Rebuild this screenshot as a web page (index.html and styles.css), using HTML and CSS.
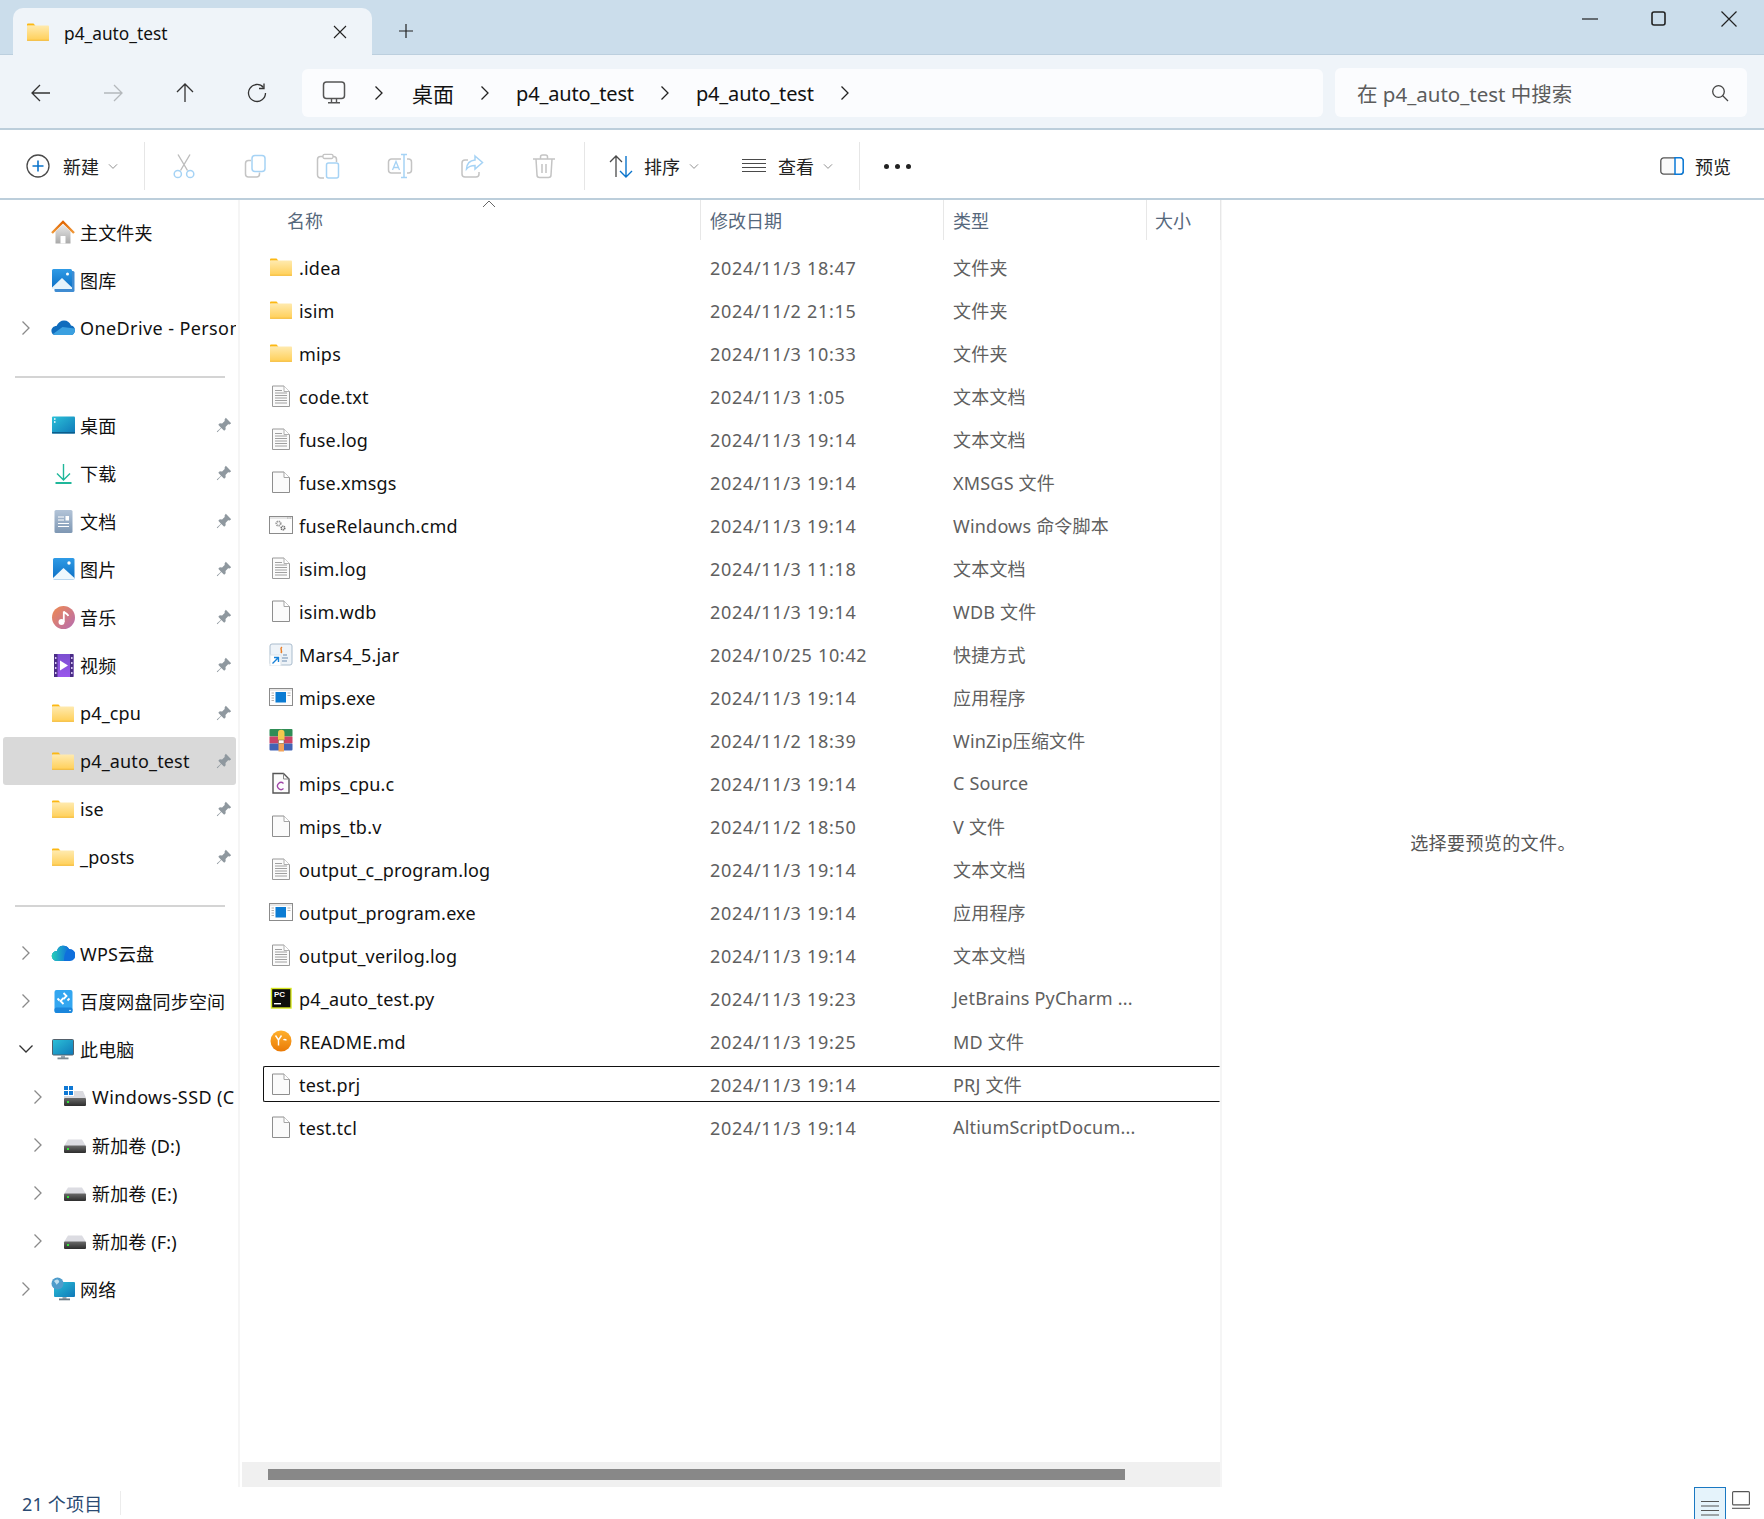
FILE: index.html
```html
<!DOCTYPE html>
<html lang="zh-CN">
<head>
<meta charset="utf-8">
<title>p4_auto_test</title>
<link rel="stylesheet" href="styles.css">
</head>
<body>
<svg class="defs" xmlns="http://www.w3.org/2000/svg">
  <defs>
    <linearGradient id="gFolder" x1="0" y1="0" x2="0" y2="1"><stop offset="0" stop-color="#ffeaae"/><stop offset="1" stop-color="#ffcf57"/></linearGradient>
    <linearGradient id="gBlue" x1="0" y1="0" x2="0" y2="1"><stop offset="0" stop-color="#2f9be6"/><stop offset="1" stop-color="#0c6fc4"/></linearGradient>
    <linearGradient id="gTeal" x1="0" y1="0" x2="1" y2="1"><stop offset="0" stop-color="#2cc1d8"/><stop offset="1" stop-color="#0f78b8"/></linearGradient>
    <linearGradient id="gDoc" x1="0" y1="0" x2="0" y2="1"><stop offset="0" stop-color="#b3c4d8"/><stop offset="1" stop-color="#7e97b3"/></linearGradient>
    <linearGradient id="gMusic" x1="0" y1="0" x2="1" y2="1"><stop offset="0" stop-color="#f08a4e"/><stop offset="1" stop-color="#b56cb4"/></linearGradient>
    <linearGradient id="gVideo" x1="0" y1="0" x2="0" y2="1"><stop offset="0" stop-color="#7b4fd0"/><stop offset="1" stop-color="#9a56ec"/></linearGradient>
    <linearGradient id="gHome" x1="0" y1="0" x2="0" y2="1"><stop offset="0" stop-color="#e9e9e9"/><stop offset="1" stop-color="#a9a9a9"/></linearGradient>
    <linearGradient id="gRoof" x1="0" y1="0" x2="0" y2="1"><stop offset="0" stop-color="#e06400"/><stop offset="1" stop-color="#f09a3a"/></linearGradient>
    <linearGradient id="gWps" x1="0" y1="0" x2="1" y2="0"><stop offset="0" stop-color="#27cfb7"/><stop offset="1" stop-color="#0f6fdc"/></linearGradient>
    <linearGradient id="gDrive" x1="0" y1="0" x2="0" y2="1"><stop offset="0" stop-color="#6b6b6b"/><stop offset="1" stop-color="#2c2c2c"/></linearGradient>
    <linearGradient id="gOrange" x1="0" y1="0" x2="0" y2="1"><stop offset="0" stop-color="#ffb12e"/><stop offset="1" stop-color="#ea7a06"/></linearGradient>

    <symbol id="i-folder" viewBox="0 0 24 24"><path d="M1 4.500a1 1 0 0 1 1-1h5.500l2 2.200H1z" fill="#fcb813"/><rect x="1" y="5.600" width="22" height="15" rx=".8" fill="url(#gFolder)"/><rect x="1" y="19.800" width="22" height=".9" fill="#f2b52a"/></symbol>
    <symbol id="i-blank" viewBox="0 0 24 24"><path d="M3.500 2h11.500l5.500 5.500V22.500h-17z" fill="#fbfbfb" stroke="#8e8e8e"/><path d="M15 2v5.500h5.500" fill="#fff" stroke="#a5a5a5"/></symbol>
    <symbol id="i-text" viewBox="0 0 24 24"><path d="M3.500 2h11.500l5.500 5.500V22.500h-17z" fill="#fbfbfb" stroke="#9a9a9a"/><path d="M15 2v5.500h5.500" fill="#fff" stroke="#b0b0b0"/><path d="M6 6.500h7M6 9h12M6 11.500h12M6 14h12M6 16.500h12M6 19h12" stroke="#a0a0a0" stroke-width="1" fill="none"/></symbol>
    <symbol id="i-cmd" viewBox="0 0 24 24"><rect x=".5" y="3.500" width="23" height="17" fill="#fdfdfd" stroke="#8b8b8b"/><rect x="1" y="4" width="22" height="2" fill="#e6e6e6"/><path d="M18 5h1.500M20.500 5H22" stroke="#aaa"/><circle cx="9.500" cy="10.500" r="2.200" fill="none" stroke="#9a9a9a" stroke-width="1.800" stroke-dasharray="1.300 .6"/><circle cx="14" cy="15" r="1.800" fill="none" stroke="#6d6d6d" stroke-width="1.600" stroke-dasharray="1.200 .5"/></symbol>
    <symbol id="i-exe" viewBox="0 0 24 24"><rect x=".5" y="3.500" width="23" height="17" fill="#fdfdfd" stroke="#8b8b8b"/><rect x="1" y="4" width="22" height="2" fill="#e8e8e8"/><rect x="6.500" y="7" width="10.500" height="10.500" fill="#0a7bd3"/><path d="M2.500 8h2.500M2.500 10.500h2.500M2.500 13h2.500M2.500 15.500h2.500M18.500 8h3M18.500 10.500h3" stroke="#b0b0b0"/></symbol>
    <symbol id="i-zip" viewBox="0 0 24 24"><rect x=".5" y="1" width="23" height="7.500" rx="1" fill="#2f8d56"/><rect x=".5" y="8.500" width="23" height="7" fill="#c94468"/><rect x=".5" y="15.500" width="23" height="7" rx="1" fill="#4263b5"/><rect x="9.500" y="13" width="5.500" height="10.500" fill="#f2a35a"/><path d="M9 12V5a3.200 3.200 0 0 1 6.500 0v7z" fill="#f4c94e"/><rect x="9.500" y="12" width="5.500" height="3.500" fill="#fff" stroke="#8b6a3e" stroke-width=".6"/></symbol>
    <symbol id="i-c" viewBox="0 0 24 24"><path d="M4 2.500h10.500l5.500 5.500v14H4z" fill="#fcfcfc" stroke="#555" stroke-width="1.400"/><path d="M14.500 2.500V8H20" fill="none" stroke="#888"/><path d="M14.500 12.500a3.500 3.500 0 1 0 0 5" fill="none" stroke="#a046a8" stroke-width="1.300"/></symbol>
    <symbol id="i-jar" viewBox="0 0 24 24"><rect x="1" y="2" width="22" height="21" rx="2" fill="#eef3f8" stroke="#a9bccd"/><path d="M13 5c-3 2 1 3-1 6" fill="none" stroke="#ea7d25" stroke-width="1.500"/><path d="M14 13h4M13 16h6M13 19h5" stroke="#6d8db0" fill="none"/><rect x="1" y="13" width="11" height="11" fill="#fff" stroke="#dde3e8"/><path d="M3.500 21.500l5.500-5.500M5 15.500h4.500V20" fill="none" stroke="#1681d8" stroke-width="1.400"/></symbol>
    <symbol id="i-py" viewBox="0 0 24 24"><rect x="2.500" y="2.500" width="19.500" height="19.500" fill="#0c0c0c" stroke="#d6e61e" stroke-width="1.400"/><text x="5" y="11" class="svg-pc">PC</text><rect x="5" y="17" width="7" height="1.400" fill="#fff"/></symbol>
    <symbol id="i-md" viewBox="0 0 24 24"><circle cx="12" cy="12" r="10.500" fill="url(#gOrange)"/><path d="M6.500 6.500L9.500 11l3-4.500M9.500 11v5.500M14.500 11c1-1 2-.2 3 0" fill="none" stroke="#fff" stroke-width="1.400"/></symbol>

    <symbol id="i-home" viewBox="0 0 24 24"><path d="M4.500 11.500L12 4.500l7.500 7V23.500h-15z" fill="url(#gHome)"/><rect x="9.500" y="16" width="5" height="7.500" rx=".5" fill="#fff"/><path d="M1 13L12 2l11 11" fill="none" stroke="url(#gRoof)" stroke-width="2.400"/></symbol>
    <symbol id="i-gallery" viewBox="0 0 24 24"><rect x="3.500" y="3" width="20" height="21" rx="1.500" fill="#3f8cd2"/><rect x="1" y="1" width="20" height="20" rx="1.500" fill="url(#gBlue)"/><path d="M1 19.500L11 10l10 9.500V21H1z" fill="#e7f4fb"/><circle cx="16.500" cy="6" r="1.500" fill="#fff"/></symbol>
    <symbol id="i-onedrive" viewBox="0 0 24 24"><path d="M.6 16c-.8-3 1.400-6 4.900-6C7 6.500 10 4.500 13 4.500c3.500 0 6 2 7 5 2.500.3 4 2.500 4 4.500 0 3-2 5-4 5H4C2.300 19 1 17.800.6 16z" fill="#0f6cbd"/><path d="M2 18c.6.7 1.300 1 2 1h16c2 0 4-2 4-5 0-.5-.1-1-.3-1.500L11.500 11z" fill="#3ba0e0"/></symbol>
    <symbol id="i-desktop" viewBox="0 0 24 24"><rect x="1" y="3.500" width="23" height="17" rx="1" fill="url(#gTeal)"/><rect x="1" y="19" width="23" height="1.500" fill="#0b5d8c"/><path d="M3 6h1.500M3 9h1.500" stroke="#fff" stroke-width="1.400"/></symbol>
    <symbol id="i-download" viewBox="0 0 24 24"><path d="M12.500 3v15M6 12.500l6.500 6.500 6.500-6.500" fill="none" stroke="#1fb79a" stroke-width="1.400"/><rect x="4.500" y="21" width="16" height="2" fill="#1fb79a"/></symbol>
    <symbol id="i-docs" viewBox="0 0 24 24"><rect x="3.500" y="1" width="18" height="23" rx="1.500" fill="url(#gDoc)"/><path d="M7 8h6M7 11h6M7 14.500h11M7 17.500h11" stroke="#fff" stroke-width="1.200"/><rect x="14.500" y="7" width="3.500" height="4.500" fill="#fff"/></symbol>
    <symbol id="i-pics" viewBox="0 0 24 24"><rect x="2" y="1" width="21.500" height="21.500" rx="1.500" fill="url(#gBlue)"/><path d="M2 21L12.500 11 23.500 21v1.500H2z" fill="#eef8fd"/><circle cx="18" cy="6" r="1.700" fill="#fff"/></symbol>
    <symbol id="i-music" viewBox="0 0 24 24"><circle cx="12.500" cy="12.500" r="11.500" fill="url(#gMusic)"/><circle cx="10.500" cy="17" r="3" fill="#fff"/><path d="M12.800 17V6.500c1 2 4 2 4.500 4.500" fill="none" stroke="#fff" stroke-width="1.800"/></symbol>
    <symbol id="i-video" viewBox="0 0 24 24"><rect x="3" y="1" width="19.500" height="23" rx="1.500" fill="url(#gVideo)"/><rect x="3" y="1" width="3.500" height="23" fill="#4a2c86"/><rect x="19" y="1" width="3.500" height="23" fill="#4a2c86"/><path d="M4.700 4v2M4.700 9v2M4.700 14v2M4.700 19v2M20.800 4v2M20.800 9v2M20.800 14v2M20.800 19v2" stroke="#d9c8f5" stroke-width="1.500"/><path d="M9 7.500l8 5-8 5z" fill="#fff"/></symbol>
    <symbol id="i-wps" viewBox="0 0 24 24"><path d="M6 10a6.500 6.500 0 0 1 12-2 6 6 0 0 1 1 12H5.500a5 5 0 0 1 .5-10z" fill="#0f6fdc"/><path d="M6 10a6.500 6.500 0 0 1 12-2c-3 1-5 5-5 12H5.500a5 5 0 0 1 .5-10z" fill="url(#gWps)"/></symbol>
    <symbol id="i-baidu" viewBox="0 0 24 24"><path d="M3.500 3a2 2 0 0 1 2-2h14a2 2 0 0 1 2 2v19a2 2 0 0 1-2 2h-14a2 2 0 0 1-2-2z" fill="#33a6f0"/><rect x="3.500" y="18.500" width="18" height="5.500" rx="2" fill="#1a86dc"/><path d="M12.500 4l3 3-3 3M12.500 15l-3-3 3-3" fill="none" stroke="#fff" stroke-width="1.800"/><path d="M6.500 9.500l2 2M18.500 9.500l-2 2" stroke="#fff" stroke-width="1.800"/><circle cx="19" cy="21.500" r=".8" fill="#fff"/></symbol>
    <symbol id="i-pc" viewBox="0 0 24 24"><rect x="1.500" y="2.500" width="21" height="15.500" rx="1" fill="url(#gTeal)" stroke="#54606b"/><rect x="10" y="18" width="4" height="3" fill="#9aa7b1"/><rect x="6.500" y="20.500" width="11" height="1.800" fill="#7d8991"/></symbol>
    <symbol id="i-ssd" viewBox="0 0 24 24"><rect x="1" y="1" width="4" height="4" fill="#0f78d4"/><rect x="6" y="1" width="4" height="4" fill="#0f78d4"/><rect x="1" y="6" width="4" height="4" fill="#0f78d4"/><rect x="6" y="6" width="4" height="4" fill="#0f78d4"/><path d="M11 6h9l3 7H1l0-2h10z" fill="#d9d9de"/><rect x="1" y="13" width="22" height="8" rx="1" fill="url(#gDrive)"/><rect x="4" y="16" width="2" height="2" fill="#35e43a"/></symbol>
    <symbol id="i-drive" viewBox="0 0 24 24"><path d="M5 6.500h14l4 6.500H1z" fill="#dcdce2"/><rect x="1" y="12.500" width="22" height="7.500" rx="1" fill="url(#gDrive)"/><rect x="4" y="15" width="2" height="2" fill="#35e43a"/></symbol>
    <symbol id="i-net" viewBox="0 0 24 24"><rect x="3" y="5" width="21" height="15" rx="1" fill="url(#gTeal)"/><rect x="11.500" y="20" width="4" height="2" fill="#9aa7b1"/><rect x="8" y="21.500" width="11" height="1.800" fill="#6b7a85"/><circle cx="6.500" cy="6.500" r="6" fill="#4f9ccb"/><path d="M3 4c2-2 4-2 5 0s-2 2-2 4" fill="#bfdff0"/></symbol>

    <symbol id="i-pin" viewBox="0 0 16 16"><path d="M9.800.8l5.400 5.400-1.600 1.200-1.500-.1-2.600 2.600.2 2.300-1.500 1.500L5.300 11l-3.900 4.200-.6-.6L5 10.700 2.300 7.800l1.500-1.500 2.300.2 2.600-2.600-.1-1.500z" fill="#8f989f"/></symbol>
    <symbol id="i-chev" viewBox="0 0 10 16"><path d="M1.500 1.500L8 8l-6.500 6.500" fill="none" stroke="currentColor" stroke-width="1.300"/></symbol>
    <symbol id="i-chevd" viewBox="0 0 16 10"><path d="M1.500 1.500L8 8l6.500-6.500" fill="none" stroke="currentColor" stroke-width="1.300"/></symbol>

    <symbol id="t-new" viewBox="0 0 24 24"><circle cx="12" cy="12" r="11" fill="#fff" stroke="#4a4a4a" stroke-width="1.300"/><path d="M12 6.500v11M6.500 12h11" stroke="#0a74cc" stroke-width="1.600"/></symbol>
    <symbol id="t-cut" viewBox="0 0 26 26"><path d="M7 1.500l9.500 16M19 1.500l-9.500 16" stroke="#bdbdbd" stroke-width="1.400" fill="none"/><circle cx="6.800" cy="21" r="3.600" fill="none" stroke="#a6d3f5" stroke-width="1.500"/><circle cx="19.200" cy="21" r="3.600" fill="none" stroke="#a6d3f5" stroke-width="1.500"/></symbol>
    <symbol id="t-copy" viewBox="0 0 26 26"><path d="M8 7.500H5.500a3 3 0 0 0-3 3V21a3 3 0 0 0 3 3h8a3 3 0 0 0 3-3v-1.500" fill="none" stroke="#c4c4c4" stroke-width="1.500"/><rect x="9" y="2.500" width="13" height="16" rx="3" fill="#fff" stroke="#a6d3f5" stroke-width="1.500"/></symbol>
    <symbol id="t-paste" viewBox="0 0 26 26"><path d="M8 3.500H5.500A3 3 0 0 0 2.500 6.500V22a3 3 0 0 0 3 3h3.500M18 3.500h.5a3 3 0 0 1 3 3V9" fill="none" stroke="#c4c4c4" stroke-width="1.500"/><rect x="8" y="1.300" width="10" height="4.200" rx="1.500" fill="#fff" stroke="#c4c4c4" stroke-width="1.300"/><rect x="11.500" y="10" width="12" height="15" rx="2" fill="#fff" stroke="#a6d3f5" stroke-width="1.500"/></symbol>
    <symbol id="t-rename" viewBox="0 0 26 26"><path d="M14 6H4.500a3 3 0 0 0-3 3v8a3 3 0 0 0 3 3H14M20 6h1.500a3 3 0 0 1 3 3v8a3 3 0 0 1-3 3H20" fill="none" stroke="#c4c4c4" stroke-width="1.500"/><path d="M5.500 17l3.500-8.500 3.500 8.500M6.700 14.500h4.600" fill="none" stroke="#a6d3f5" stroke-width="1.300"/><path d="M17 1.500v23M14 1.500h6M14 24.500h6" fill="none" stroke="#a6d3f5" stroke-width="1.500"/></symbol>
    <symbol id="t-share" viewBox="0 0 26 26"><path d="M9 7H6a3 3 0 0 0-3 3v11a3 3 0 0 0 3 3h11a3 3 0 0 0 3-3v-2" fill="none" stroke="#c4c4c4" stroke-width="1.500"/><path d="M16 3l7.500 6.500L16 16v-3.500c-4 0-6.500 1-8.500 3.500.3-5.500 3.500-8.500 8.500-9z" fill="#fff" stroke="#a6d3f5" stroke-width="1.500"/></symbol>
    <symbol id="t-del" viewBox="0 0 26 26"><path d="M2 6h22M9.500 6V4a2 2 0 0 1 2-2h3a2 2 0 0 1 2 2v2M5 6l1 16a2.500 2.500 0 0 0 2.500 2.500h9A2.500 2.500 0 0 0 20 22l1-16M11 11v9M15 11v9" fill="none" stroke="#c4c4c4" stroke-width="1.500"/></symbol>
    <symbol id="t-sort" viewBox="0 0 26 26"><path d="M8 24V3M2 9l6-6 6 6" fill="none" stroke="#4a4a4a" stroke-width="1.300"/><path d="M18 3v21M12 18l6 6 6-6" fill="none" stroke="#0a74cc" stroke-width="1.400"/></symbol>
    <symbol id="t-view" viewBox="0 0 24 24"><path d="M0 5.500h24M0 9.500h24M0 13.500h24M0 17.500h24" stroke="#4a4a4a" stroke-width="1.200"/></symbol>
    <symbol id="t-preview" viewBox="0 0 24 18"><rect x=".8" y=".8" width="22.400" height="16.400" rx="3" fill="#fafafa" stroke="#555" stroke-width="1.300"/><path d="M15 .8h5.200a3 3 0 0 1 3 3v10.400a3 3 0 0 1-3 3H15z" fill="#fff" stroke="#0a7ad8" stroke-width="1.500"/></symbol>
    <symbol id="n-pc" viewBox="0 0 24 24"><rect x="1.500" y="1" width="21" height="16.500" rx="3" fill="none" stroke="#555" stroke-width="1.500"/><path d="M9.500 17.500v4M14.500 17.500v4M6 21.700h12" fill="none" stroke="#555" stroke-width="1.400"/></symbol>
  </defs>
</svg>

<div class="window">
  <header class="titlebar">
    <div class="tab">
      <svg class="ic-tab"><use href="#i-folder"/></svg>
      <span class="tab-title">p4_auto_test</span>
      <svg class="tab-close" viewBox="0 0 14 14"><path d="M1 1l12 12M13 1L1 13" stroke="#222" stroke-width="1.100" fill="none"/></svg>
    </div>
    <svg class="tab-add" viewBox="0 0 16 16"><path d="M8 1v14M1 8h14" stroke="#222" stroke-width="1.200" fill="none"/></svg>
    <div class="winctl">
      <svg class="wc wc-min" viewBox="0 0 16 16"><path d="M0 8h16" stroke="#222" stroke-width="1.200"/></svg>
      <svg class="wc wc-max" viewBox="0 0 15 15"><rect x="1" y="1" width="13" height="13" rx="2" fill="none" stroke="#222" stroke-width="1.600"/></svg>
      <svg class="wc wc-close" viewBox="0 0 16 16"><path d="M.5.500l15 15M15.500.500l-15 15" stroke="#222" stroke-width="1.200" fill="none"/></svg>
    </div>
  </header>

  <nav class="navbar">
    <div class="navbtn"><svg class="nv" viewBox="0 0 20 20"><path d="M19 10H1.500M9 2l-8 8 8 8" fill="none" stroke="#333" stroke-width="1.300"/></svg></div>
    <div class="navbtn"><svg class="nv" viewBox="0 0 20 20"><path d="M1 10h17.500M11 2l8 8-8 8" fill="none" stroke="#b4b8bc" stroke-width="1.300"/></svg></div>
    <div class="navbtn"><svg class="nv" viewBox="0 0 20 20"><path d="M10 19V1.500M2 9l8-8 8 8" fill="none" stroke="#333" stroke-width="1.300"/></svg></div>
    <div class="navbtn"><svg class="nv" viewBox="0 0 20 20"><path d="M16.500 4.500A8.500 8.500 0 1 0 18.500 10" fill="none" stroke="#333" stroke-width="1.300"/><path d="M17 .5v5h-5" fill="none" stroke="#333" stroke-width="1.300"/></svg></div>
    <div class="address">
      <svg class="addr-pc"><use href="#n-pc"/></svg>
      <svg class="crumb-chev first"><use href="#i-chev"/></svg>
      <span class="crumb crumb-cjk">桌面</span>
      <svg class="crumb-chev"><use href="#i-chev"/></svg>
      <span class="crumb">p4_auto_test</span>
      <svg class="crumb-chev"><use href="#i-chev"/></svg>
      <span class="crumb">p4_auto_test</span>
      <svg class="crumb-chev"><use href="#i-chev"/></svg>
    </div>
    <div class="search">
      <span class="search-text">在 p4_auto_test 中搜索</span>
      <svg class="search-ic" viewBox="0 0 18 18"><circle cx="7.500" cy="7.500" r="5.800" fill="none" stroke="#444" stroke-width="1.300"/><path d="M11.500 11.500l5.500 5.500" stroke="#444" stroke-width="1.300"/></svg>
    </div>
  </nav>

  <div class="toolbar">
    <svg class="tb-new"><use href="#t-new"/></svg>
    <span class="tb-label new-label">新建</span>
    <svg class="tb-caret"><use href="#i-chevd"/></svg>
    <i class="tb-sep sep-a"></i>
    <div class="tb-group">
      <span class="tb-slot"><svg class="tb-ic"><use href="#t-cut"/></svg></span>
      <span class="tb-slot"><svg class="tb-ic"><use href="#t-copy"/></svg></span>
      <span class="tb-slot"><svg class="tb-ic"><use href="#t-paste"/></svg></span>
      <span class="tb-slot"><svg class="tb-ic"><use href="#t-rename"/></svg></span>
      <span class="tb-slot"><svg class="tb-ic"><use href="#t-share"/></svg></span>
      <span class="tb-slot"><svg class="tb-ic"><use href="#t-del"/></svg></span>
    </div>
    <i class="tb-sep sep-b"></i>
    <svg class="tb-ic sort-ic"><use href="#t-sort"/></svg>
    <span class="tb-label sort-label">排序</span>
    <svg class="tb-caret"><use href="#i-chevd"/></svg>
    <svg class="tb-view"><use href="#t-view"/></svg>
    <span class="tb-label view-label">查看</span>
    <svg class="tb-caret"><use href="#i-chevd"/></svg>
    <i class="tb-sep sep-c"></i>
    <div class="tb-more"><b></b><b></b><b></b></div>
    <div class="tb-preview">
      <svg class="tb-preview-ic"><use href="#t-preview"/></svg>
      <span class="tb-label">预览</span>
    </div>
  </div>

  <main class="main">
    <aside class="sidebar">
      <section class="side-sec">
        <div class="srow"><span class="chev"></span><svg class="sic"><use href="#i-home"/></svg><span class="slabel">主文件夹</span></div>
        <div class="srow"><span class="chev"></span><svg class="sic"><use href="#i-gallery"/></svg><span class="slabel">图库</span></div>
        <div class="srow"><span class="chev"><svg class="chev-ic"><use href="#i-chev"/></svg></span><svg class="sic"><use href="#i-onedrive"/></svg><span class="slabel wide">OneDrive - Person</span></div>
      </section>
      <hr class="side-sep">
      <section class="side-sec">
        <div class="srow"><span class="chev"></span><svg class="sic"><use href="#i-desktop"/></svg><span class="slabel">桌面</span><svg class="pin"><use href="#i-pin"/></svg></div>
        <div class="srow"><span class="chev"></span><svg class="sic"><use href="#i-download"/></svg><span class="slabel">下载</span><svg class="pin"><use href="#i-pin"/></svg></div>
        <div class="srow"><span class="chev"></span><svg class="sic"><use href="#i-docs"/></svg><span class="slabel">文档</span><svg class="pin"><use href="#i-pin"/></svg></div>
        <div class="srow"><span class="chev"></span><svg class="sic"><use href="#i-pics"/></svg><span class="slabel">图片</span><svg class="pin"><use href="#i-pin"/></svg></div>
        <div class="srow"><span class="chev"></span><svg class="sic"><use href="#i-music"/></svg><span class="slabel">音乐</span><svg class="pin"><use href="#i-pin"/></svg></div>
        <div class="srow"><span class="chev"></span><svg class="sic"><use href="#i-video"/></svg><span class="slabel">视频</span><svg class="pin"><use href="#i-pin"/></svg></div>
        <div class="srow"><span class="chev"></span><svg class="sic"><use href="#i-folder"/></svg><span class="slabel">p4_cpu</span><svg class="pin"><use href="#i-pin"/></svg></div>
        <div class="srow active"><span class="chev"></span><svg class="sic"><use href="#i-folder"/></svg><span class="slabel">p4_auto_test</span><svg class="pin"><use href="#i-pin"/></svg></div>
        <div class="srow"><span class="chev"></span><svg class="sic"><use href="#i-folder"/></svg><span class="slabel">ise</span><svg class="pin"><use href="#i-pin"/></svg></div>
        <div class="srow"><span class="chev"></span><svg class="sic"><use href="#i-folder"/></svg><span class="slabel">_posts</span><svg class="pin"><use href="#i-pin"/></svg></div>
      </section>
      <hr class="side-sep tight">
      <section class="side-sec">
        <div class="srow"><span class="chev"><svg class="chev-ic"><use href="#i-chev"/></svg></span><svg class="sic"><use href="#i-wps"/></svg><span class="slabel">WPS云盘</span></div>
        <div class="srow"><span class="chev"><svg class="chev-ic"><use href="#i-chev"/></svg></span><svg class="sic"><use href="#i-baidu"/></svg><span class="slabel">百度网盘同步空间</span></div>
        <div class="srow"><span class="chev"><svg class="chev-down"><use href="#i-chevd"/></svg></span><svg class="sic"><use href="#i-pc"/></svg><span class="slabel">此电脑</span></div>
        <div class="srow child"><span class="chev"><svg class="chev-ic"><use href="#i-chev"/></svg></span><svg class="sic"><use href="#i-ssd"/></svg><span class="slabel wide">Windows-SSD (C</span></div>
        <div class="srow child"><span class="chev"><svg class="chev-ic"><use href="#i-chev"/></svg></span><svg class="sic"><use href="#i-drive"/></svg><span class="slabel">新加卷 (D:)</span></div>
        <div class="srow child"><span class="chev"><svg class="chev-ic"><use href="#i-chev"/></svg></span><svg class="sic"><use href="#i-drive"/></svg><span class="slabel">新加卷 (E:)</span></div>
        <div class="srow child"><span class="chev"><svg class="chev-ic"><use href="#i-chev"/></svg></span><svg class="sic"><use href="#i-drive"/></svg><span class="slabel">新加卷 (F:)</span></div>
        <div class="srow"><span class="chev"><svg class="chev-ic"><use href="#i-chev"/></svg></span><svg class="sic"><use href="#i-net"/></svg><span class="slabel">网络</span></div>
      </section>
    </aside>

    <section class="files">
      <div class="fhead">
        <div class="hcell hname">名称<svg class="sort-caret" viewBox="0 0 14 8"><path d="M1 7l6-6 6 6" fill="none" stroke="#666" stroke-width="1"/></svg></div>
        <div class="hcell hdate">修改日期</div>
        <div class="hcell htype">类型</div>
        <div class="hcell hsize">大小</div>
      </div>
      <div class="flist">
        <div class="frow"><svg class="fic"><use href="#i-folder"/></svg><span class="fname">.idea</span><span class="fdate">2024/11/3 18:47</span><span class="ftype">文件夹</span></div>
        <div class="frow"><svg class="fic"><use href="#i-folder"/></svg><span class="fname">isim</span><span class="fdate">2024/11/2 21:15</span><span class="ftype">文件夹</span></div>
        <div class="frow"><svg class="fic"><use href="#i-folder"/></svg><span class="fname">mips</span><span class="fdate">2024/11/3 10:33</span><span class="ftype">文件夹</span></div>
        <div class="frow"><svg class="fic"><use href="#i-text"/></svg><span class="fname">code.txt</span><span class="fdate">2024/11/3 1:05</span><span class="ftype">文本文档</span></div>
        <div class="frow"><svg class="fic"><use href="#i-text"/></svg><span class="fname">fuse.log</span><span class="fdate">2024/11/3 19:14</span><span class="ftype">文本文档</span></div>
        <div class="frow"><svg class="fic"><use href="#i-blank"/></svg><span class="fname">fuse.xmsgs</span><span class="fdate">2024/11/3 19:14</span><span class="ftype">XMSGS 文件</span></div>
        <div class="frow"><svg class="fic"><use href="#i-cmd"/></svg><span class="fname">fuseRelaunch.cmd</span><span class="fdate">2024/11/3 19:14</span><span class="ftype">Windows 命令脚本</span></div>
        <div class="frow"><svg class="fic"><use href="#i-text"/></svg><span class="fname">isim.log</span><span class="fdate">2024/11/3 11:18</span><span class="ftype">文本文档</span></div>
        <div class="frow"><svg class="fic"><use href="#i-blank"/></svg><span class="fname">isim.wdb</span><span class="fdate">2024/11/3 19:14</span><span class="ftype">WDB 文件</span></div>
        <div class="frow"><svg class="fic"><use href="#i-jar"/></svg><span class="fname">Mars4_5.jar</span><span class="fdate">2024/10/25 10:42</span><span class="ftype">快捷方式</span></div>
        <div class="frow"><svg class="fic"><use href="#i-exe"/></svg><span class="fname">mips.exe</span><span class="fdate">2024/11/3 19:14</span><span class="ftype">应用程序</span></div>
        <div class="frow"><svg class="fic"><use href="#i-zip"/></svg><span class="fname">mips.zip</span><span class="fdate">2024/11/2 18:39</span><span class="ftype">WinZip压缩文件</span></div>
        <div class="frow"><svg class="fic"><use href="#i-c"/></svg><span class="fname">mips_cpu.c</span><span class="fdate">2024/11/3 19:14</span><span class="ftype">C Source</span></div>
        <div class="frow"><svg class="fic"><use href="#i-blank"/></svg><span class="fname">mips_tb.v</span><span class="fdate">2024/11/2 18:50</span><span class="ftype">V 文件</span></div>
        <div class="frow"><svg class="fic"><use href="#i-text"/></svg><span class="fname">output_c_program.log</span><span class="fdate">2024/11/3 19:14</span><span class="ftype">文本文档</span></div>
        <div class="frow"><svg class="fic"><use href="#i-exe"/></svg><span class="fname">output_program.exe</span><span class="fdate">2024/11/3 19:14</span><span class="ftype">应用程序</span></div>
        <div class="frow"><svg class="fic"><use href="#i-text"/></svg><span class="fname">output_verilog.log</span><span class="fdate">2024/11/3 19:14</span><span class="ftype">文本文档</span></div>
        <div class="frow"><svg class="fic"><use href="#i-py"/></svg><span class="fname">p4_auto_test.py</span><span class="fdate">2024/11/3 19:23</span><span class="ftype">JetBrains PyCharm ...</span></div>
        <div class="frow"><svg class="fic"><use href="#i-md"/></svg><span class="fname">README.md</span><span class="fdate">2024/11/3 19:25</span><span class="ftype">MD 文件</span></div>
        <div class="frow focused"><svg class="fic"><use href="#i-blank"/></svg><span class="fname">test.prj</span><span class="fdate">2024/11/3 19:14</span><span class="ftype">PRJ 文件</span></div>
        <div class="frow"><svg class="fic"><use href="#i-blank"/></svg><span class="fname">test.tcl</span><span class="fdate">2024/11/3 19:14</span><span class="ftype">AltiumScriptDocum...</span></div>
      </div>
      <div class="hscroll"><div class="hthumb"></div></div>
    </section>

    <section class="preview">选择要预览的文件。</section>
  </main>

  <footer class="statusbar">
    <span class="count">21 个项目</span>
    <i class="status-sep"></i>
    <div class="viewbtn on"><svg class="vb-ic" viewBox="0 0 18 18"><path d="M0 2.500h18M0 7h18M0 11.500h18M0 16h18" stroke="#555" stroke-width="1.100"/></svg></div>
    <svg class="vb-tile" viewBox="0 0 18 18"><rect x=".6" y=".6" width="16.800" height="13.300" rx="1" fill="none" stroke="#555" stroke-width="1.100"/><path d="M0 17.300h18" stroke="#555" stroke-width="1.100"/></svg>
  </footer>
</div>
</body>
</html>
```

FILE: styles.css
```css
* { box-sizing: border-box; }
html, body { margin: 0; padding: 0; background: #fff; }
body {
  width: 1764px;
  height: 1519px;
  overflow: hidden;
  font-family: "Noto Sans", "Noto Sans CJK SC", sans-serif;
  font-size: 18px;
  color: #111;
}
.defs { display: block; width: 0; height: 0; overflow: hidden; }
.svg-pc { font-family: "Liberation Sans", sans-serif; font-weight: 700; font-size: 8px; fill: #fff; }
.window { width: 1764px; height: 1519px; display: flex; flex-direction: column; background: #fff; }

/* title bar */
.titlebar {
  height: 55px;
  flex: none;
  display: flex;
  align-items: flex-end;
  padding-left: 13px;
  background: #cbddeb;
  border-bottom: 1px solid #bccfde;
}
.tab {
  width: 359px;
  height: 47px;
  margin-bottom: -1px;
  display: flex;
  align-items: center;
  padding: 3px 25px 0 13px;
  background: #eff4f9;
  border-radius: 10px 10px 0 0;
}
.ic-tab { width: 24px; height: 24px; flex: none; margin-top: -3px; }
.tab-title { margin-left: 14px; font-size: 17.300px; }
.tab-close { width: 14px; height: 14px; margin-left: auto; margin-top: -3px; }
.tab-add { width: 16px; height: 16px; margin: 0 0 15px 26px; }
.winctl { margin-left: auto; align-self: flex-start; display: flex; padding: 11px 27px 0 0; }
.wc { display: block; }
.wc-min { width: 16px; height: 16px; }
.wc-max { width: 15px; height: 15px; margin-left: 53px; }
.wc-close { width: 16px; height: 16px; margin-left: 55px; }

/* nav bar */
.navbar {
  height: 75px;
  flex: none;
  display: flex;
  align-items: flex-start;
  padding: 13px 17px 0 5px;
  background: #eff4f9;
  border-bottom: 2px solid #bccedb;
}
.navbtn { width: 72px; height: 49px; flex: none; display: flex; align-items: center; justify-content: center; }
.nv { width: 20px; height: 20px; }
.address {
  width: 1021px;
  height: 48px;
  margin: 1px 12px 0 9px;
  flex: none;
  display: flex;
  align-items: center;
  padding-left: 20px;
  background: #fbfcfe;
  border-radius: 6px;
  font-size: 20px;
}
.addr-pc { width: 24px; height: 24px; flex: none; }
.crumb { letter-spacing: -.15px; }
.crumb-cjk { font-size: 21px; letter-spacing: 0; }
.crumb-chev { width: 10px; height: 16px; flex: none; margin: 0 26px; color: #222; }
.crumb-chev.first { margin: 0 28px 0 28px; }
.search {
  flex: 1;
  height: 49px;
  display: flex;
  align-items: center;
  padding: 0 18px 0 22px;
  background: #fbfcfe;
  border-radius: 6px;
  font-size: 20.500px;
  color: #5c5c5c;
}
.search-ic { width: 18px; height: 18px; margin-left: auto; }

/* toolbar */
.toolbar {
  height: 70px;
  flex: none;
  display: flex;
  align-items: center;
  padding: 4px 33px 0 26px;
  background: #fff;
  border-bottom: 2px solid #bccedb;
}
.tb-new { width: 24px; height: 24px; flex: none; }
.tb-label { font-size: 18px; white-space: nowrap; color: #222; }
.new-label { margin-left: 13px; }
.sort-label { margin-left: 10px; }
.view-label { margin-left: 12px; }
.tb-caret { width: 10px; height: 7px; flex: none; margin-left: 9px; color: #777; }
.tb-sep { display: block; width: 1px; height: 48px; flex: none; background: #e6e6e6; }
.sep-a { margin-left: 26px; }
.sep-b { margin-left: 4px; }
.sep-c { margin-left: 26px; }
.tb-group { display: flex; margin-left: 3px; }
.tb-slot { width: 72px; display: flex; justify-content: center; }
.tb-ic { width: 26px; height: 26px; flex: none; }
.sort-ic { margin-left: 23px; }
.tb-view { width: 24px; height: 24px; flex: none; margin-left: 43px; }
.tb-more { display: flex; gap: 6px; margin-left: 24px; }
.tb-more b { display: block; width: 5px; height: 5px; border-radius: 50%; background: #222; }
.tb-preview { margin-left: auto; display: flex; align-items: center; gap: 11px; }
.tb-preview-ic { width: 24px; height: 18px; flex: none; }

/* main */
.main { flex: 1; min-height: 0; display: flex; }
.sidebar {
  width: 240px;
  flex: none;
  padding: 8px 0 0 3px;
  border-right: 2px solid #f5f5f5;
}
.srow {
  width: 233px;
  height: 48px;
  display: flex;
  align-items: center;
  overflow: hidden;
  padding-left: 18px;
  border-radius: 3px;
}
.srow.active { background: #d9d9d9; }
.chev { width: 10px; height: 16px; flex: none; margin-right: 20px; display: flex; align-items: center; justify-content: center; color: #8a8a8a; }
.chev-ic { width: 10px; height: 16px; flex: none; }
.chev-down { width: 16px; height: 10px; flex: none; color: #333; }
.sic { width: 24px; height: 24px; flex: none; }
.slabel { margin-left: 5px; white-space: nowrap; flex: none; letter-spacing: .15px; }
.slabel.wide { letter-spacing: .4px; }
.srow.child { padding-left: 30px; }
.srow.child .chev { margin-right: 20px; }
.pin { width: 16px; height: 16px; flex: none; margin-left: auto; margin-right: 4px; }
.side-sep { height: 2px; margin: 24px 13px 23px 12px; border: 0; background: #d4d4d4; }
.side-sep.tight { margin-bottom: 22px; }

/* file pane */
.files {
  width: 982px;
  flex: none;
  display: flex;
  flex-direction: column;
  border-right: 2px solid #f5f5f5;
}
.fhead { height: 40px; flex: none; display: flex; position: relative; color: #56687c; }
.hcell { height: 40px; display: flex; align-items: center; flex: none; border-right: 1px solid #e7e7e7; padding-left: 9px; }
.hname { width: 461px; padding-left: 47px; }
.hdate { width: 243px; }
.htype { width: 203px; }
.hsize { width: 74px; padding-left: 8px; }
.sort-caret { position: absolute; left: 242px; top: 0; width: 14px; height: 8px; }
.flist { flex: 1; min-height: 0; display: flex; flex-direction: column; gap: 7px; padding: 9px 0 0 23px; }
.frow {
  width: 957px;
  height: 36px;
  flex: none;
  display: grid;
  grid-template-columns: 35px 411px 243px 1fr;
  align-items: center;
  border: 1px solid transparent;
  white-space: nowrap;
}
.frow.focused { border-color: #111; border-right-color: transparent; border-radius: 2px 0 0 2px; }
.fic { width: 24px; height: 24px; justify-self: start; margin-left: 5px; }
.fname { color: #111; letter-spacing: .2px; padding-top: 2px; }
.fdate { color: #606060; letter-spacing: .68px; padding-top: 2px; }
.ftype { color: #606060; letter-spacing: .2px; }
.hscroll { height: 25px; flex: none; margin-left: 2px; padding: 7px 0 0 26px; background: #f0f0f0; }
.hthumb { width: 857px; height: 11px; background: #888; }
.preview { flex: 1; display: flex; align-items: center; justify-content: center; color: #555; padding-bottom: 4px; letter-spacing: .4px; }

/* status bar */
.statusbar { height: 32px; flex: none; display: flex; align-items: center; padding: 0 14px 0 22px; }
.count { color: #2a4a72; width: 98px; letter-spacing: .2px; }
.status-sep { display: block; width: 1px; height: 24px; background: #ececec; }
.viewbtn {
  width: 32px;
  height: 32px;
  margin-left: auto;
  display: flex;
  align-items: center;
  justify-content: center;
  background: #e5f3fb;
  border: 1px solid #1a78c2;
  border-bottom: 0;
}
.vb-ic { width: 18px; height: 18px; margin-top: 8px; }
.vb-tile { width: 18px; height: 18px; margin-left: 6px; margin-top: -6px; }
```
